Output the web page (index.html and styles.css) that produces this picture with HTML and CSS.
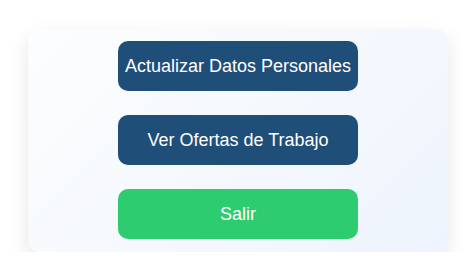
FILE: index.html
```html
<!DOCTYPE html>
<html lang="es">
  <head>
    <meta charset="UTF-8" />
    <meta name="viewport" content="width=device-width, initial-scale=1.0" />
    <title>Panel</title>
    <link rel="stylesheet" href="styles.css">
  </head>
  <body>
    <main class="panel">
      <button class="btn btn-primary">Actualizar Datos Personales</button>
      <button class="btn btn-primary">Ver Ofertas de Trabajo</button>
      <button class="btn btn-exit">Salir</button>
    </main>
  </body>
</html>
```

FILE: styles.css
```css
* {
  margin: 0;
  padding: 0;
  box-sizing: border-box;
  border: none;
  outline: none;
}
body {
  background-color: #fff;
  font-family: "Liberation Sans", Arial, sans-serif;
  padding: 29px 0 0 28px;
}
.panel {
  width: 420px;
  padding: 12px 0 13px;
  display: flex;
  flex-direction: column;
  align-items: center;
  gap: 24px;
  border-radius: 12px;
  background: linear-gradient(135deg, #fcfdfe 0%, #eef4fd 100%);
  box-shadow: 0 8px 20px rgba(0, 0, 0, 0.1);
}
.btn {
  width: 240px;
  height: 50px;
  border-radius: 10px;
  color: #fff;
  font-family: inherit;
  font-size: 18px;
  cursor: pointer;
}
.btn-primary {
  background-color: #1f4e79;
}
.btn-exit {
  background-color: #2ecc71;
}
```
